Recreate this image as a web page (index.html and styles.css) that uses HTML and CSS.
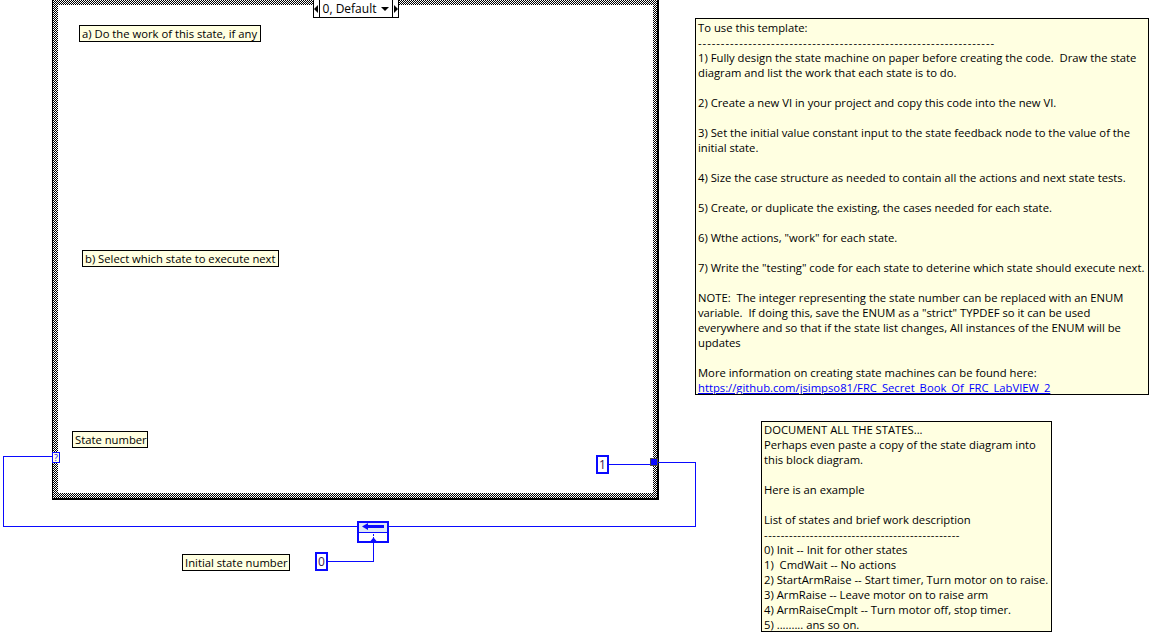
FILE: index.html
```html
<!DOCTYPE html>
<html>
<head>
<meta charset="utf-8">
<title>State machine template</title>
<link rel="stylesheet" href="styles.css">
</head>
<body>
<div class="diagram">
  <div class="case">
    <div class="case-inner"></div>
  </div>

  <div class="selector">
    <span class="sel-btn sel-prev"><span class="tri-left"></span></span>
    <span class="sel-text">0, Default</span>
    <span class="tri-down"></span>
    <span class="sel-btn sel-next"><span class="tri-right"></span></span>
  </div>

  <div class="label lbl-work">a) Do the work of this state, if any</div>
  <div class="label lbl-select">b) Select which state to execute next</div>
  <div class="label lbl-state">State number</div>
  <div class="label lbl-init">Initial state number</div>

  <div class="tunnel-left">?</div>
  <div class="const const-one">1</div>
  <div class="const const-zero">0</div>

  <svg class="wires" width="1161" height="636" viewBox="0 0 1161 636">
    <g fill="none" stroke="#0a0aff" stroke-width="1" shape-rendering="crispEdges">
      <path d="M52 456.5 H3.5 V526.5 H358"/>
      <path d="M388 526.5 H695.5 V462.5 H658"/>
      <path d="M609 464.5 H650"/>
      <path d="M327 561.5 H373.5 V543"/>
    </g>
    <rect x="650.5" y="458.5" width="7" height="7" fill="#0a0aff" stroke="#4a4a4a" shape-rendering="crispEdges"/>
    <g class="feedback" shape-rendering="crispEdges">
      <rect x="358" y="522" width="30" height="20" fill="#ffffff" stroke="#0a0aff" stroke-width="2"/>
      <rect x="359" y="523" width="28" height="9" fill="#dfe8f4"/>
      <path d="M359 532.5 H387" stroke="#0a0aff" stroke-width="1"/>
      <path d="M367 525 H384 V528 H367 Z" fill="#0a0aff"/>
      <path d="M362 526.5 L368 523 V530 Z" fill="#0a0aff" shape-rendering="geometricPrecision"/>
      <path d="M373.5 534 V536 M373.5 537 V539" stroke="#0a0aff"/>
      <path d="M370.5 541 L373.5 537.5 L376.5 541 Z" fill="#0a0aff" shape-rendering="geometricPrecision"/>
    </g>
  </svg>

  <div class="comment comment-main"><span>To use this template:
<span class="dashes dashes-main">-----------------------------------------------------------------</span>
1) Fully design the state machine on paper before creating the code.  Draw the state
diagram and list the work that each state is to do.

2) Create a new VI in your project and copy this code into the new VI.

3) Set the initial value constant input to the state feedback node to the value of the
initial state.

4) Size the case structure as needed to contain all the actions and next state tests.

5) Create, or duplicate the existing, the cases needed for each state.

6) Wthe actions, "work" for each state.

7) Write the "testing" code for each state to deterine which state should execute next.

NOTE:  The integer representing the state number can be replaced with an ENUM
variable.  If doing this, save the ENUM as a "strict" TYPDEF so it can be used
everywhere and so that if the state list changes, All instances of the ENUM will be
updates

More information on creating state machines can be found here:
</span><a class="link" href="#">https://github.com/jsimpso81/FRC_Secret_Book_Of_FRC_LabVIEW_2</a></div>

  <div class="comment comment-states">DOCUMENT ALL THE STATES...
Perhaps even paste a copy of the state diagram into
this block diagram.

Here is an example

List of states and brief work description
<span class="dashes dashes-states">-----------------------------------------------</span>
0) Init -- Init for other states
1)  CmdWait -- No actions
2) StartArmRaise -- Start timer, Turn motor on to raise.
3) ArmRaise -- Leave motor on to raise arm
4) ArmRaiseCmplt -- Turn motor off, stop timer.
5) ......... ans so on.</div>
</div>
</body>
</html>
```

FILE: styles.css
```css
html, body {
  margin: 0;
  padding: 0;
  background: #ffffff;
}

.diagram {
  position: relative;
  width: 1161px;
  height: 636px;
  overflow: hidden;
  font-family: "Open Sans", "Noto Sans", "DejaVu Sans", sans-serif;
  font-size: 11.25px;
  color: #000;
}

/* case structure: 1px checkerboard frame */
.case {
  position: absolute;
  left: 52px;
  top: 0;
  width: 607px;
  height: 500px;
  box-sizing: border-box;
  border-left: 1px solid #000;
  border-right: 2px solid #000;
  border-bottom: 2px solid #000;
  padding: 5px 4px 5px 5px;
  background-image:
    repeating-linear-gradient(90deg, #000 0 1px, #fff 1px 2px),
    repeating-linear-gradient(180deg, #000 0 1px, #fff 1px 2px);
  background-blend-mode: difference;
}

.case-inner {
  width: 100%;
  height: 100%;
  background: #fff;
}

.selector {
  position: absolute;
  left: 313px;
  top: 0;
  height: 18px;
  width: 86px;
  box-sizing: border-box;
  display: flex;
  align-items: center;
  background: #fff;
  border: 1px solid #000;
  border-top: none;
}

.sel-btn {
  display: flex;
  align-items: center;
  justify-content: center;
  width: 5px;
  height: 100%;
}

.sel-prev { border-right: 1px solid #000; }
.sel-next { border-left: 1px solid #000; margin-left: auto; }

.tri-left {
  width: 0;
  height: 0;
  border-top: 4px solid transparent;
  border-bottom: 4px solid transparent;
  border-right: 4px solid #000;
}

.tri-right {
  width: 0;
  height: 0;
  border-top: 4px solid transparent;
  border-bottom: 4px solid transparent;
  border-left: 4px solid #000;
}

.tri-down {
  width: 0;
  height: 0;
  margin-left: 5px;
  margin-right: 3px;
  border-left: 4px solid transparent;
  border-right: 4px solid transparent;
  border-top: 4px solid #000;
}

.sel-text {
  padding-left: 3px;
  font-size: 12px;
  line-height: 16px;
  white-space: nowrap;
}

/* free labels */
.label {
  position: absolute;
  box-sizing: border-box;
  height: 17px;
  padding: 0 2px;
  line-height: 15px;
  background: #ffffe1;
  border: 1px solid #000;
  white-space: nowrap;
}

.lbl-work { left: 79px; top: 25px; width: 182px; }
.lbl-select { left: 82px; top: 250px; width: 197px; }
.lbl-state { left: 72px; top: 431px; width: 76px; }
.lbl-init { left: 182px; top: 554px; width: 108px; }

/* terminals and constants */
.tunnel-left {
  position: absolute;
  left: 52px;
  top: 452px;
  width: 8px;
  height: 11px;
  box-sizing: border-box;
  border: 1px solid #0a0aff;
  background: #ffffe1;
  color: #0a0aff;
  font-size: 9px;
  line-height: 9px;
  text-align: center;
}

.const {
  position: absolute;
  box-sizing: border-box;
  width: 13px;
  height: 19px;
  border: 2px solid #0a0aff;
  background: #fff;
  color: #3a2050;
  font-size: 12px;
  line-height: 15px;
  text-align: center;
}

.const-one { left: 596px; top: 455px; }
.const-zero { left: 315px; top: 552px; }

.wires {
  position: absolute;
  left: 0;
  top: 0;
  pointer-events: none;
}

/* comments */
.comment {
  position: absolute;
  box-sizing: border-box;
  background: #ffffe1;
  border: 1px solid #000;
  line-height: 15px;
  white-space: pre;
  overflow: hidden;
}

.comment-main {
  left: 695px;
  top: 18px;
  width: 454px;
  height: 377px;
  padding: 1px 2px;
}

.comment-states {
  left: 761px;
  top: 421px;
  width: 291px;
  height: 211px;
  padding: 0 2px 0;
}

.dashes-main { letter-spacing: 0.95px; }
.dashes-states { letter-spacing: 0.55px; }

.link {
  color: #0000ff;
  text-decoration: underline;
}
```
